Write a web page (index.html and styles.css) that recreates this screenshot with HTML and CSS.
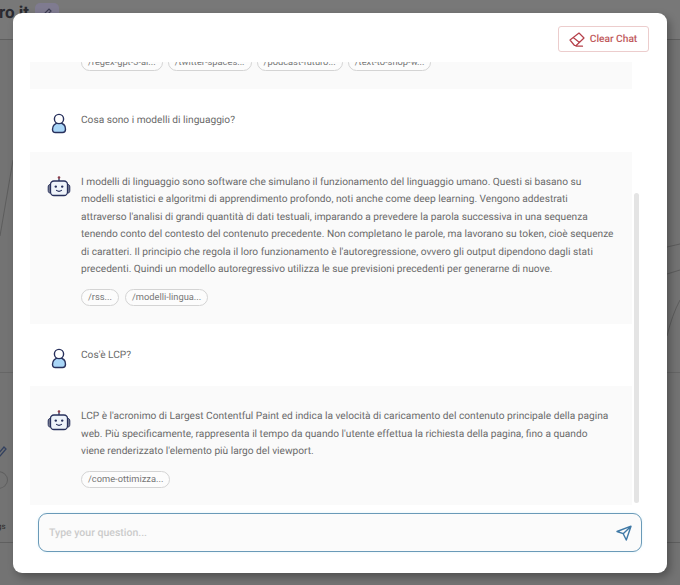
FILE: index.html
```html
<!DOCTYPE html>
<html lang="it">
<head>
<meta charset="utf-8">
<title>Chat</title>
<link rel="stylesheet" href="styles.css">
</head>
<body>
<svg class="defs" width="0" height="0" aria-hidden="true">
  <symbol id="user" viewBox="0 0 24 24">
    <path d="M5.500 16.200c0-3.800 2.500-6.200 6.500-6.200s6.500 2.400 6.500 6.200c0 2.200-1.100 3.300-3 3.300h-7c-1.900 0-3-1.100-3-3.300z" fill="#a9d6f7" stroke="#27305c" stroke-width="1.400"/>
    <circle cx="12" cy="6" r="4.600" fill="#fff" stroke="#27305c" stroke-width="1.400"/>
  </symbol>
  <symbol id="robot" viewBox="0 0 24 24">
    <path d="M3.500 8.500H2.800C1.800 8.500 1.200 9.600 1.200 11v3.500c0 1.400.6 2.500 1.600 2.500h.7zM20.500 8.500h.7c1 0 1.600 1.100 1.600 2.500v3.500c0 1.400-.6 2.500-1.600 2.500h-.7z" fill="#7c8094" stroke="#27305c" stroke-width="1"/>
    <rect x="3.500" y="5" width="17" height="14.500" rx="3.500" fill="#eef3fa" stroke="#27305c" stroke-width="1.300"/>
    <path d="M12 5V2.500" stroke="#27305c" stroke-width="1.300"/>
    <circle cx="12" cy="1.600" r="1.300" fill="#8a3f4c"/>
    <circle cx="8.800" cy="10.600" r="1.200" fill="#27305c"/>
    <circle cx="15.200" cy="10.600" r="1.200" fill="#27305c"/>
    <path d="M9.500 14.400c1.500 1.100 3.500 1.100 5 0" fill="none" stroke="#27305c" stroke-width="1.100" stroke-linecap="round"/>
  </symbol>
</svg>

<div class="backdrop">
  <header class="page-head">
    <span class="page-title">ro it</span>
    <span class="page-edit"><svg width="12" height="12" viewBox="0 0 12 12"><path d="M2 10l1-3 5-5 2 2-5 5z" fill="none" stroke="#3c3c52" stroke-width="1.200"/></svg></span>
  </header>
  <div class="page-foot">
    <svg class="page-pen" width="12" height="14" viewBox="0 0 12 14"><path d="M1 13l1-4 6-7 2 2-6 7z" fill="none" stroke="#33415f" stroke-width="1.300"/></svg>
    <span class="page-round"></span>
    <span class="page-tags">gs</span>
  </div>
  <svg class="page-lines" width="680" height="585" viewBox="0 0 680 585" aria-hidden="true">
    <path d="M13 160 0 236M680 300Q672 315 667 336M667 274 680 270M667 247 680 244" fill="none" stroke="#5d5d5d"/>
  </svg>
</div>

<main class="modal">
  <div class="modal-top">
    <button class="clear-btn" type="button">
      <svg width="16" height="15" viewBox="0 0 16 15"><path d="M1 8 10 1l5 5-7.800 7.500H5.500zM4.200 5.500 10.500 10.500M7 14.200h6.500" fill="none" stroke="#b5404a" stroke-width="1.200" stroke-linejoin="round" stroke-linecap="round"/></svg>
      <span>Clear Chat</span>
    </button>
  </div>

  <div class="chat-wrap">
    <section class="chat">
      <article class="msg bot first">
        <div class="chips">
          <span class="chip">/regex-gpt-3-ai...</span>
          <span class="chip">/twitter-spaces...</span>
          <span class="chip">/podcast-futuro...</span>
          <span class="chip">/text-to-shop-w...</span>
        </div>
      </article>

      <article class="msg user">
        <svg class="avatar"><use href="#user"/></svg>
        <div class="body"><p>Cosa sono i modelli di linguaggio?</p></div>
      </article>

      <article class="msg bot">
        <svg class="avatar"><use href="#robot"/></svg>
        <div class="body">
          <p>I modelli di linguaggio sono software che simulano il funzionamento del linguaggio umano. Questi si basano su<br>modelli statistici e algoritmi di apprendimento profondo, noti anche come deep learning. Vengono addestrati<br>attraverso l'analisi di grandi quantità di dati testuali, imparando a prevedere la parola successiva in una sequenza<br>tenendo conto del contesto del contenuto precedente. Non completano le parole, ma lavorano su token, cioè sequenze<br>di caratteri. Il principio che regola il loro funzionamento è l'autoregressione, ovvero gli output dipendono dagli stati<br>precedenti. Quindi un modello autoregressivo utilizza le sue previsioni precedenti per generarne di nuove.</p>
          <div class="chips">
            <span class="chip">/rss...</span>
            <span class="chip">/modelli-lingua...</span>
          </div>
        </div>
      </article>

      <article class="msg user">
        <svg class="avatar"><use href="#user"/></svg>
        <div class="body"><p>Cos'è LCP?</p></div>
      </article>

      <article class="msg bot last">
        <svg class="avatar"><use href="#robot"/></svg>
        <div class="body">
          <p>LCP è l'acronimo di Largest Contentful Paint ed indica la velocità di caricamento del contenuto principale della pagina<br>web. Più specificamente, rappresenta il tempo da quando l'utente effettua la richiesta della pagina, fino a quando<br>viene renderizzato l'elemento più largo del viewport.</p>
          <div class="chips">
            <span class="chip">/come-ottimizza...</span>
          </div>
        </div>
      </article>
    </section>
    <div class="scroll-track"><div class="scroll-thumb"></div></div>
  </div>

  <form class="ask">
    <span class="ask-hint">Type your question...</span>
    <svg width="16" height="16" viewBox="0 0 16 16"><path d="M1 6.500 15 1.200 10.300 15 7.200 8.700zM7.200 8.700 15 1.200" fill="none" stroke="#3f79a6" stroke-width="1.400" stroke-linejoin="round"/></svg>
  </form>
</main>
</body>
</html>
```

FILE: styles.css
```css
* { box-sizing: border-box; }
html, body { margin: 0; height: 100%; }
body {
  position: relative;
  width: 680px;
  height: 585px;
  overflow: hidden;
  font-family: Roboto, "Liberation Sans", sans-serif;
  text-rendering: geometricPrecision;
  background: #707070;
}
.defs { position: absolute; }

.backdrop {
  position: absolute;
  inset: 0;
  display: flex;
  flex-direction: column;
  justify-content: space-between;
  background: #737373;
}
.page-lines { position: absolute; inset: 0; }
.page-head {
  height: 40px;
  display: flex;
  align-items: flex-start;
  gap: 6px;
  padding-top: 3px;
  background: #787878;
  border-bottom: 1px solid #5f5f5f;
}
.page-title {
  margin-left: -1px;
  font-size: 17px;
  font-weight: 700;
  color: #2a2a30;
}
.page-edit {
  width: 24px;
  height: 20px;
  border-radius: 5px;
  background: #7f7b90;
  display: flex;
  align-items: center;
  justify-content: center;
}
.page-foot {
  height: 171px;
  margin-bottom: 42px;
  display: flex;
  flex-direction: column;
  align-items: flex-start;
  padding-top: 72px;
  border-top: 1px solid #666;
  border-bottom: 1px solid #5f5f5f;
}
.page-pen { margin-left: -4px; }
.page-round {
  width: 20px;
  height: 18px;
  margin: 12px 0 0 -12px;
  border: 1px solid #5f5f5f;
  border-radius: 50%;
}
.page-tags {
  margin: 33px 0 0 -3px;
  font-size: 8px;
  color: #2b2b2b;
}

.modal {
  position: absolute;
  left: 13px;
  top: 13px;
  width: 654px;
  height: 560px;
  padding: 13px 18px 0 17px;
  background: #fff;
  border-radius: 9px;
  box-shadow: 3px 4px 8px rgba(0, 0, 0, .3);
  display: flex;
  flex-direction: column;
}
.modal-top {
  display: flex;
  justify-content: flex-end;
  height: 36px;
}
.clear-btn {
  width: 91px;
  height: 26px;
  display: flex;
  align-items: center;
  justify-content: center;
  gap: 5px;
  padding: 0 1px 0 0;
  font: 500 10.200px Roboto, sans-serif;
  text-rendering: geometricPrecision;
  color: #bf5a5c;
  background: #fff;
  border: 1px solid #eccdcd;
  border-radius: 3px;
}

.chat-wrap {
  display: flex;
  height: 443px;
  gap: 2px;
}
.chat {
  width: 602px;
  height: 443px;
  overflow: hidden;
  display: flex;
  flex-direction: column;
  flex: none;
}
.msg {
  display: flex;
  flex: none;
  gap: 10px;
  padding: 0 17px;
  color: #6a6a6a;
  font-size: 10.170px;
  line-height: 17.500px;
}
.msg.bot { background: #fafafa; }
.msg.user {
  height: 62.500px;
  align-items: flex-start;
  padding-top: 23px;
}
.msg.user .avatar { margin-top: 1px; }
.msg.bot:not(.first) { padding-top: 22px; padding-bottom: 18px; }
.msg.last { flex: 1; }
.msg.first {
  height: 27px;
  padding-left: 51px;
  align-items: flex-end;
  padding-bottom: 18px;
}
.avatar {
  width: 24px;
  height: 24px;
  flex: none;
  margin-top: 2px;
}
.body { min-width: 0; }
.body p { margin: 0; white-space: nowrap; }
.chips {
  display: flex;
  gap: 6px;
  margin-top: 10px;
}
.msg.first .chips { margin-top: 0; gap: 5px; }
.chip {
  height: 17px;
  padding: 0 6px;
  display: flex;
  align-items: center;
  white-space: nowrap;
  font-size: 9.300px;
  line-height: 15px;
  color: #777;
  background: #fcfcfc;
  border: 1px solid #d4d4d4;
  border-radius: 9px;
}
.scroll-track {
  width: 5px;
  height: 443px;
  display: flex;
  flex-direction: column;
  justify-content: flex-end;
}
.scroll-thumb {
  height: 310px;
  margin-bottom: 2px;
  background: #e4e4e4;
  border-radius: 3px;
}

.ask {
  margin: 8px 7px 0 8px;
  height: 39px;
  display: flex;
  align-items: center;
  justify-content: space-between;
  padding: 0 9px 0 10px;
  background: #fbfbfb;
  border: 1px solid #6a9ab8;
  border-radius: 9px;
  box-shadow: 0 0 3px #dff2fa;
}
.ask-hint {
  font-size: 10.500px;
  font-weight: 500;
  color: #cbcbcb;
}
```
